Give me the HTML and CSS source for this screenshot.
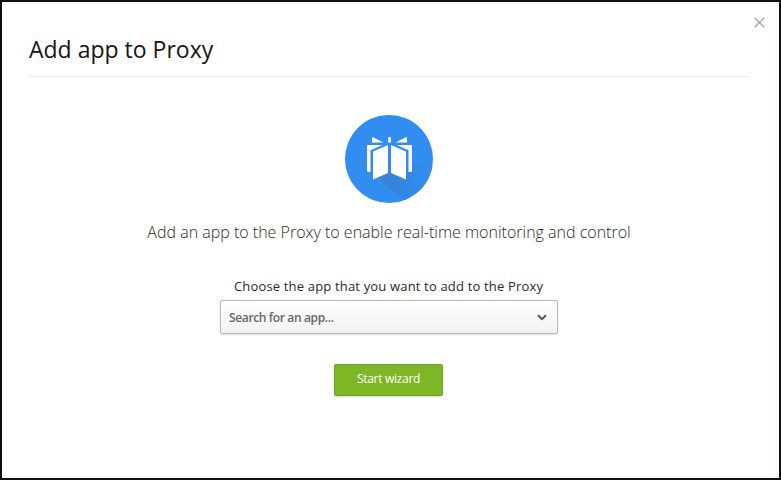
FILE: index.html
```html
<!DOCTYPE html>
<html lang="en">
<head>
<meta charset="utf-8">
<title>Add app to Proxy</title>
<link rel="stylesheet" href="styles.css">
</head>
<body>
<main class="dialog">
  <button class="close" aria-label="Close"><svg width="11" height="11" viewBox="0 0 11 11"><path d="M.7 .7 10.3 10.3M10.3 .7 .7 10.3"/></svg></button>
  <header class="header"><h1 class="title">Add app to Proxy</h1></header>
  <section class="content">
    <svg class="logo" width="88" height="88" viewBox="0 0 88 88">
      <defs>
        <linearGradient id="shade" x1="28" y1="52" x2="80" y2="60" gradientUnits="userSpaceOnUse"><stop offset="0" stop-color="#4583cd"/><stop offset=".45" stop-color="#3483dc"/><stop offset="1" stop-color="#318df0"/></linearGradient>
        <clipPath id="disc"><circle cx="44" cy="44" r="44"/></clipPath>
      </defs>
      <circle cx="44" cy="44" r="44" fill="#318df0"/>
      <path clip-path="url(#disc)" fill="url(#shade)" d="M24 55 58 84 88 70V51L67 47V57Z"/>
      <g fill="#fff">
        <path d="M27 22.800Q27 21.800 28 22.300L38.500 27.600H27.500Q26.700 27.600 27 27ZM62 22.800Q62 21.800 61 22.300L50.500 27.600H61.500Q62.300 27.600 62 27Z"/>
        <rect x="43.200" y="22" width="2.800" height="5.800" rx="1.200"/>
        <path d="M23 30H37.500L25.500 35.300V57H23.500Q22 57 22 55.500V31Q22 30 23 30ZM66 30H51.500L63.500 35.300V57H65.500Q67 57 67 55.500V31Q67 30 66 30Z"/>
        <path d="M43 30V58L28 64.500V36.500ZM46 30 61 36.500V64.500L46 58Z"/>
      </g>
    </svg>
    <p class="lead">Add an app to the Proxy to enable real-time monitoring and control</p>
    <div class="label">Choose the app that you want to add to the Proxy</div>
    <div class="select" role="combobox"><span class="placeholder">Search for an app...</span><svg width="10" height="7" viewBox="0 0 10 7"><path d="M1 1.200 5 5.200 9 1.200"/></svg></div>
    <button class="start"><span>Start wizard</span></button>
  </section>
</main>
</body>
</html>
```
FILE: styles.css
```css
* { box-sizing: border-box; }
body { margin: 0; font-family: "Open Sans", "Noto Sans", sans-serif; color: #2a2a2a; }
button { font-family: inherit; padding: 0; }
.dialog { position: relative; width: 781px; height: 480px; border: 2px solid #110f11; background: #fff; padding: 0 30px 0 27px; overflow: hidden; }
.close { position: absolute; top: 15px; right: 14px; width: 11px; height: 11px; border: 0; background: none; }
.close svg { display: block; }
.close path { stroke: #a3a5b0; stroke-width: 1.5; fill: none; }
.header { height: 75px; border-bottom: 1px solid #ebebeb; padding-top: 31px; }
.title { margin: 0; font-size: 23px; line-height: 32px; font-weight: 400; white-space: nowrap; color: #161616; }
.content { display: flex; flex-direction: column; align-items: center; padding-top: 38px; }
.logo { display: block; }
.lead { margin: 16px 0 0; font-size: 16px; line-height: 26px; font-weight: 300; white-space: nowrap; color: #2a2a2a; }
.label { margin: 30px 1px 0 0; font-size: 13px; line-height: 22px; letter-spacing: 0.17px; white-space: nowrap; }
.select { width: 338px; height: 34px; margin-top: 3px; border: 1px solid #b7b7b7; border-radius: 2px; background: linear-gradient(#fff, #f2f2f2); box-shadow: 0 1px 2px rgba(0,0,0,.13); display: flex; align-items: center; justify-content: space-between; padding: 0 10px 0 8px; }
.select path { fill: none; stroke: #555; stroke-width: 2; }
.placeholder { font-size: 12px; font-weight: 600; letter-spacing: -0.36px; color: #666; white-space: nowrap; }
.start { width: 109px; height: 32px; margin: 30px 1px 0 0; border: 1px solid #6fa51f; border-radius: 2px; background: #7db726; box-shadow: 0 1px 2px rgba(0,0,0,.16); color: #fff; font-size: 12px; line-height: 28px; letter-spacing: -0.3px; white-space: nowrap; }
.start span { display: block; height: 30px; }
```
